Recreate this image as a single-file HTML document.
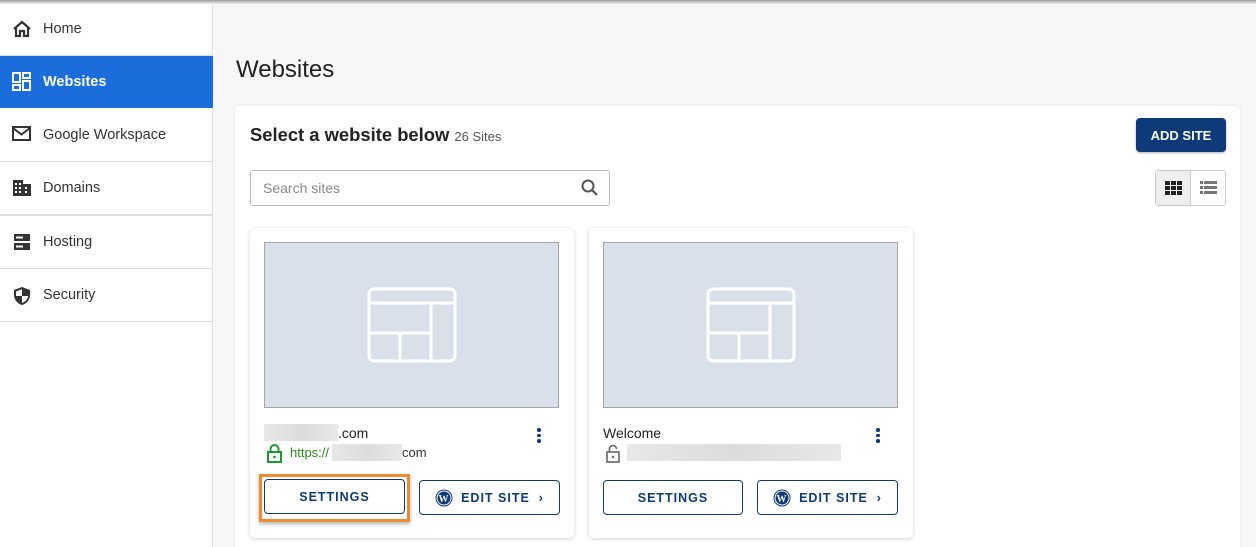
<!DOCTYPE html>
<html><head><meta charset="utf-8"><style>
*{box-sizing:border-box;margin:0;padding:0}
html,body{width:1256px;height:547px;overflow:hidden}
body{background:#f7f7f7;font-family:"Liberation Sans",sans-serif;position:relative;color:#222}
.topsh{position:absolute;left:0;top:0;width:1256px;height:4px;background:linear-gradient(#9a9a9a,#f0f0f0)}
.side{position:absolute;left:0;top:3px;width:213px;height:560px;background:#fff;border-right:1px solid #e2e2e2}
.item{position:absolute;left:0;width:213px;height:53px;border-bottom:1px solid #ddd;display:flex;align-items:center;padding-left:43px;font-size:14.5px;color:#333}
.item svg{position:absolute;left:12px;top:17px}
.item.act{background:#1b6ddc;color:#fff;font-weight:bold;border:none}
.abs{position:absolute}
.panel{position:absolute;left:235px;top:106px;width:1005px;height:460px;background:#fff;border-radius:4px;box-shadow:0 0 3px rgba(0,0,0,.08)}
.card{position:absolute;top:228px;width:324px;height:310px;background:#fff;border-radius:5px;box-shadow:0 1px 4px rgba(0,0,0,.18)}
.thumb{position:absolute;left:14px;top:14px;width:295px;height:166px;background:#d9e0ea;border:1px solid #a5a5a5}
.btn{position:absolute;height:35px;border:1px solid #0e3a7a;border-radius:4px;color:#0e3a7a;font-weight:bold;font-size:12.5px;letter-spacing:1px;display:flex;align-items:center;justify-content:center;background:#fff}
.dots{position:absolute;width:4px}
.dots i{display:block;width:3.5px;height:3.5px;border-radius:50%;background:#0e3a7a;margin-bottom:2px}
.blur{position:absolute;background:linear-gradient(90deg,#e8e8e8,#dcdcdc,#e8e8e8)}
</style></head><body>
<div class="side">
 <div class="item" style="top:0"><svg width="20" height="18" viewBox="0 0 20 18"><path d="M2 9 L10 2 L18 9 M4 7.5 V16 H8 V11 H12 V16 H16 V7.5" fill="none" stroke="#333" stroke-width="2.2"/></svg>Home</div>
 <div class="item act" style="top:53px;height:52px"><svg width="20" height="20" viewBox="0 0 20 20" style="top:16px"><g fill="none" stroke="#fff" stroke-width="2"><rect x="1" y="1" width="7" height="9"/><rect x="11" y="1" width="7" height="5"/><rect x="1" y="13" width="7" height="5"/><rect x="11" y="9" width="7" height="9"/></g></svg>Websites</div>
 <div class="item" style="top:106px"><svg width="20" height="16" viewBox="0 0 20 16"><rect x="1" y="1" width="17" height="13" fill="none" stroke="#333" stroke-width="2"/><path d="M1 2 L9.5 8.5 L18 2" fill="none" stroke="#333" stroke-width="2"/></svg>Google Workspace</div>
 <div class="item" style="top:159px"><svg width="20" height="18" viewBox="0 0 20 18"><rect x="1" y="1" width="10" height="16" fill="#333"/><rect x="11" y="5" width="8" height="12" fill="#333"/><g fill="#fff"><rect x="3" y="4" width="2" height="2"/><rect x="7" y="4" width="2" height="2"/><rect x="3" y="8" width="2" height="2"/><rect x="7" y="8" width="2" height="2"/><rect x="3" y="12" width="2" height="2"/><rect x="7" y="12" width="2" height="2"/><rect x="13" y="8" width="2" height="2"/><rect x="13" y="12" width="2" height="2"/></g></svg>Domains</div>
 <div class="item" style="top:212px;border-top:1px solid #ddd;height:54px"><svg width="20" height="18" viewBox="0 0 20 18"><rect x="2" y="1" width="16" height="7" fill="#333"/><rect x="2" y="10" width="16" height="7" fill="#333"/><rect x="4" y="3.5" width="7" height="2" fill="#fff"/><rect x="4" y="12.5" width="7" height="2" fill="#fff"/></svg>Hosting</div>
 <div class="item" style="top:266px"><svg width="20" height="20" viewBox="0 0 20 20"><path d="M10 1 L18 4 V9 C18 14 14 18 10 19 C6 18 2 14 2 9 V4 Z" fill="#333"/><path d="M10 3 V17 C13 16 16 13 16 10 H10 Z M10 10 H4 V5.5 L10 3.2" fill="#fff"/></svg>Security</div>
</div>
<div class="topsh"></div>
<div class="abs" style="left:236px;top:56px;font-size:24px;color:#222">Websites</div>
<div class="panel"></div>
<div class="abs" style="left:250px;top:124px;font-size:18.4px;font-weight:bold;color:#222">Select a website below <span style="font-size:13px;font-weight:normal;color:#555">26 Sites</span></div>
<div class="abs" style="left:1136px;top:118px;width:90px;height:34px;background:#0e3a7a;border-radius:4px;color:#fff;font-weight:bold;font-size:13px;display:flex;align-items:center;justify-content:center;box-shadow:0 1px 2px rgba(0,0,0,.3)">ADD SITE</div>
<div class="abs" style="left:250px;top:170px;width:360px;height:36px;border:1px solid #bbb;border-radius:3px;font-size:14px;color:#888;padding:9px 0 0 12px">Search sites
 <svg class="abs" style="left:330px;top:8px" width="18" height="18" viewBox="0 0 18 18"><circle cx="7" cy="7" r="5.5" fill="none" stroke="#555" stroke-width="2"/><path d="M11 11 L16 16" stroke="#555" stroke-width="2.2"/></svg></div>
<div class="abs" style="left:1155px;top:170px;width:71px;height:36px;border:1px solid #ccc;border-radius:3px;overflow:hidden">
 <div class="abs" style="left:0;top:0;width:35px;height:36px;background:#eee;border-right:1px solid #ccc"></div>
 <svg class="abs" style="left:9px;top:10px" width="17" height="15" viewBox="0 0 17 15"><g fill="#222"><rect x="0" y="0" width="5" height="4"/><rect x="6" y="0" width="5" height="4"/><rect x="12" y="0" width="5" height="4"/><rect x="0" y="5" width="5" height="4"/><rect x="6" y="5" width="5" height="4"/><rect x="12" y="5" width="5" height="4"/><rect x="0" y="10" width="5" height="4"/><rect x="6" y="10" width="5" height="4"/><rect x="12" y="10" width="5" height="4"/></g></svg>
 <svg class="abs" style="left:44px;top:10px" width="17" height="15" viewBox="0 0 17 15"><g fill="#777"><rect x="0" y="0" width="3" height="3"/><rect x="4" y="0" width="13" height="3"/><rect x="0" y="5" width="3" height="3"/><rect x="4" y="5" width="13" height="3"/><rect x="0" y="10" width="3" height="3"/><rect x="4" y="10" width="13" height="3"/></g></svg>
</div>

<div class="card" style="left:250px">
 <div class="thumb"><svg class="abs" style="left:102px;top:44px" width="90" height="76" viewBox="0 0 90 76"><g fill="none" stroke="#fff" stroke-width="3"><rect x="2" y="2" width="86" height="72" rx="5"/><path d="M2 16 H88 M64 16 V74 M2 46 H64 M33 46 V74"/></g></svg></div>
 <div class="blur" style="left:14px;top:196px;width:74px;height:17px"></div>
 <div class="abs" style="left:88px;top:197px;font-size:14px;color:#222">.com</div>
 <div class="dots" style="left:287px;top:200px"><i></i><i></i><i></i></div>
 <svg class="abs" style="left:17px;top:216px" width="15" height="19" viewBox="0 0 15 19"><path d="M3.5 8 V5 A4 4 0 0 1 11.5 5 V8" fill="none" stroke="#1b9a2b" stroke-width="2"/><rect x="1" y="8" width="13" height="10" fill="none" stroke="#1b9a2b" stroke-width="2"/><circle cx="7.5" cy="13" r="1.3" fill="#1b9a2b"/></svg>
 <div class="abs" style="left:40px;top:217px;font-size:13px;color:#2a8a1b">https://</div>
 <div class="blur" style="left:82px;top:216px;width:70px;height:17px"></div>
 <div class="abs" style="left:152px;top:217px;font-size:13px;color:#333">com</div>
 <div class="abs" style="left:9px;top:246px;width:151px;height:48px;border:3px solid #f08a30;box-shadow:0 2px 4px rgba(0,0,0,.3)"></div>
 <div class="btn" style="left:14px;top:251px;width:141px">SETTINGS</div>
 <div class="btn" style="left:169px;top:252px;width:141px"><svg width="18" height="18" viewBox="0 0 18 18" style="margin-right:8px"><circle cx="9" cy="9" r="8.5" fill="#0e3a7a"/><circle cx="9" cy="9" r="7" fill="none" stroke="#fff" stroke-width="1"/><text x="9" y="13" font-size="10" font-weight="bold" fill="#fff" text-anchor="middle" font-family="Liberation Serif">W</text></svg>EDIT SITE&nbsp;&nbsp;›</div>
</div>

<div class="card" style="left:589px">
 <div class="thumb"><svg class="abs" style="left:102px;top:44px" width="90" height="76" viewBox="0 0 90 76"><g fill="none" stroke="#fff" stroke-width="3"><rect x="2" y="2" width="86" height="72" rx="5"/><path d="M2 16 H88 M64 16 V74 M2 46 H64 M33 46 V74"/></g></svg></div>
 <div class="abs" style="left:14px;top:197px;font-size:14px;color:#222">Welcome</div>
 <div class="dots" style="left:287px;top:200px"><i></i><i></i><i></i></div>
 <svg class="abs" style="left:17px;top:216px" width="14" height="19" viewBox="0 0 14 19"><path d="M3.5 8 V5 A3.5 3.5 0 0 1 10.5 5" fill="none" stroke="#666" stroke-width="1.6"/><rect x="1" y="8" width="12" height="10" fill="none" stroke="#666" stroke-width="1.6"/><circle cx="7" cy="13" r="1.2" fill="#666"/></svg>
 <div class="blur" style="left:38px;top:216px;width:214px;height:17px"></div>
 <div class="btn" style="left:14px;top:252px;width:140px">SETTINGS</div>
 <div class="btn" style="left:168px;top:252px;width:141px"><svg width="18" height="18" viewBox="0 0 18 18" style="margin-right:8px"><circle cx="9" cy="9" r="8.5" fill="#0e3a7a"/><circle cx="9" cy="9" r="7" fill="none" stroke="#fff" stroke-width="1"/><text x="9" y="13" font-size="10" font-weight="bold" fill="#fff" text-anchor="middle" font-family="Liberation Serif">W</text></svg>EDIT SITE&nbsp;&nbsp;›</div>
</div>
</body></html>
